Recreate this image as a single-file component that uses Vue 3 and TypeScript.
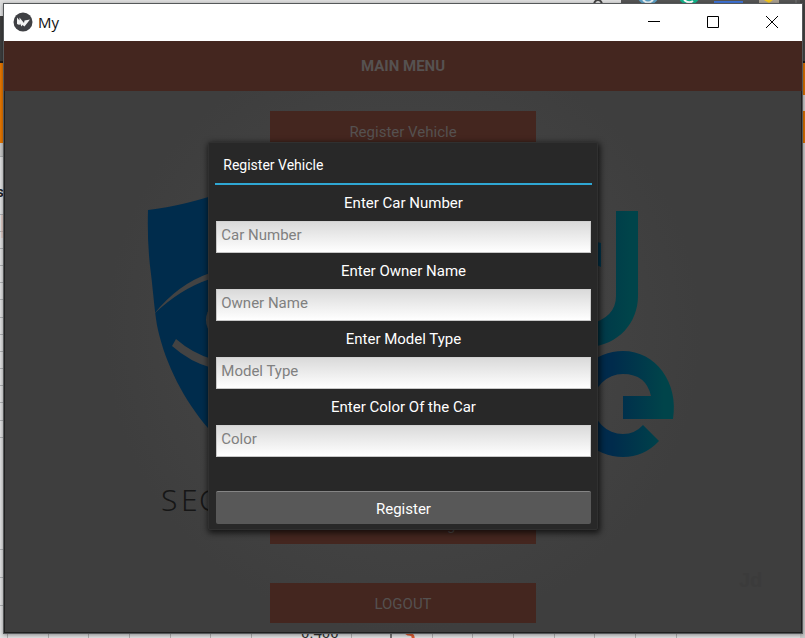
<script setup lang="ts">
import { reactive } from 'vue'

interface Field {
  id: string
  label: string
  placeholder: string
}

const fields: Field[] = [
  { id: 'car-number', label: 'Enter Car Number', placeholder: 'Car Number' },
  { id: 'owner-name', label: 'Enter Owner Name', placeholder: 'Owner Name' },
  { id: 'model-type', label: 'Enter Model Type', placeholder: 'Model Type' },
  { id: 'color', label: 'Enter Color Of the Car', placeholder: 'Color' },
]

const values = reactive<Record<string, string>>({
  'car-number': '',
  'owner-name': '',
  'model-type': '',
  color: '',
})

// Row and column rules of the sheet that lies behind the window
const rowLines = [156, 214, 231, 248, 265, 282, 299, 317, 334, 351, 368, 385, 402, 420, 437, 549, 577, 605]
const columnLines = [7, 48, 88, 129, 170, 210, 251, 351, 391, 432, 472, 513, 554, 594, 635, 676]
</script>

<template>
  <div class="desktop">
    <svg class="behind" viewBox="0 0 805 638" preserveAspectRatio="xMidYMid slice" aria-hidden="true">
      <rect width="805" height="638" fill="#e0e1e2" />
      <rect width="805" height="4" fill="#dedede" />
      <rect y="16" width="4" height="45" fill="#3d3d3d" />
      <rect y="61" width="4" height="2" fill="#1c1c1c" />
      <rect y="63" width="4" height="80" fill="#e67700" />
      <rect y="143" width="4" height="13" fill="#c9c9c9" />
      <rect x="800" width="5" height="638" fill="#cbcbcb" />
      <rect x="621" width="184" height="4" fill="#555" />
      <rect x="800" width="5" height="61" fill="#444" />
      <rect x="800" y="61" width="5" height="2" fill="#1c1c1c" />
      <rect x="800" y="63" width="5" height="32" fill="#d87000" />
      <rect x="800" y="111" width="5" height="32" fill="#d87000" />
      <rect v-for="y in rowLines" :key="'r' + y" :y="y" width="4" height="1" fill="#b0b2b4" />
      <rect v-for="x in columnLines" :key="'c' + x" :x="x" y="632" width="1" height="6" fill="#b0b0b0" />
      <rect x="390" y="632" width="2" height="6" fill="#777" />
      <path d="M2 215v23" stroke="#e2b9ad" />
      <path d="M594 4q1-4 4-4t4 4" fill="none" stroke="#444" stroke-width="2" />
      <circle cx="648" cy="-6" r="11" fill="#5b9fc4" />
      <path d="M643 0q5 5 10 0" fill="none" stroke="#e8f1f5" stroke-width="2" />
      <circle cx="689" cy="-6" r="11" fill="#12b38a" />
      <path d="M684 0q5 4 9 1" fill="none" stroke="#fff" stroke-width="2" />
      <rect x="714" y="1" width="29" height="3" fill="#3f74d8" />
      <rect x="759" y="0" width="20" height="3" fill="#a99f90" />
      <path d="M764 0h9l-4 3z" fill="#f2c51d" />
      <path d="M796 0v4" stroke="#777" />
      <text x="0" y="197" class="sheet-bold">s</text>
      <text x="301" y="638" class="sheet-text">0.400</text>
      <path d="M405 632l3 2q6 0 5 5" fill="none" stroke="#dc5b31" stroke-width="3" />
    </svg>

    <div class="window">
      <header class="titlebar">
        <svg class="app-icon" viewBox="0 0 20 20" aria-hidden="true">
          <circle cx="10" cy="10" r="9.5" fill="#3f4044" />
          <path d="M4 5.5l2.500 3V5.500L11 11l.5-2.500 5.500-1-5.500 7-2-1.500-1 1.500-1.500-3L6.500 13 4 12z" fill="#f4f4f4" />
        </svg>
        <span class="window-name">My</span>
        <div class="controls">
          <button type="button" aria-label="Minimize">
            <svg viewBox="0 0 12 12"><path d="M0 5.5h12" /></svg>
          </button>
          <button type="button" aria-label="Maximize">
            <svg viewBox="0 0 12 12"><path d="M.5.5h11v11H.5z" /></svg>
          </button>
          <button type="button" aria-label="Close">
            <svg viewBox="0 0 12 12"><path d="M0 0l12 12M12 0L0 12" /></svg>
          </button>
        </div>
      </header>

      <main class="client">
        <h1 class="menu-title">MAIN MENU</h1>
        <div class="stage">
          <svg class="artwork" viewBox="4 91 798 541" preserveAspectRatio="xMidYMid slice" aria-hidden="true">
            <defs>
              <linearGradient id="teal" gradientUnits="userSpaceOnUse" x1="590" y1="0" x2="630" y2="0">
                <stop offset="0" stop-color="#003548" />
                <stop offset="1" stop-color="#00444a" />
              </linearGradient>
              <linearGradient id="ring" gradientUnits="userSpaceOnUse" x1="612" y1="0" x2="664" y2="0">
                <stop offset="0" stop-color="#002b4c" />
                <stop offset="1" stop-color="#00444a" />
              </linearGradient>
            </defs>
            <path
              d="M148 210Q184 206 230 190V449Q222 444 208 428C184 400 166 365 158 330C155 317 153 290 151 274Q147 245 148 210Z"
              fill="#002c4c"
            />
            <path d="M154 314Q178 284 210 273V279Q180 289 154 314Z" fill="#434343" />
            <path d="M176 339Q192 353 212 359V368Q190 362 172 346Z" fill="#434343" />
            <circle cx="226" cy="320" r="20" fill="#434343" />
            <path d="M590 240L601 243V267L590 262Z" fill="#003952" />
            <path
              d="M616 211H638V296C638 323 618 345 590 347V324Q616 317 616 296Z"
              fill="url(#teal)"
            />
            <path
              d="M623 419H673C679 383 656 351 623 351A53 53 0 0 0 623 457Q644 457 659 441L643 425Q635 434 623 434A30 30 0 0 1 623 374Q646 374 651 396H623Z"
              fill="url(#ring)"
            />
            <text x="161 181 199" y="511" class="art-word">SEC</text>
            <text x="739" y="587" class="art-mark">Jd</text>
          </svg>
          <nav class="menu">
            <button type="button">Register Vehicle</button>
            <button type="button" class="push">Detection Of Images</button>
            <button type="button">LOGOUT</button>
          </nav>
        </div>

        <div class="overlay">
          <form class="dialog" role="dialog" aria-labelledby="dialog-title" @submit.prevent>
            <h2 id="dialog-title">Register Vehicle</h2>
            <template v-for="f in fields" :key="f.id">
              <label :for="f.id">{{ f.label }}</label>
              <input :id="f.id" v-model="values[f.id]" type="text" :placeholder="f.placeholder" />
            </template>
            <button type="submit">Register</button>
          </form>
        </div>
      </main>
    </div>
  </div>
</template>

<style>
body {
  margin: 0;
}
</style>

<style scoped>
* {
  box-sizing: border-box;
}

.desktop {
  position: relative;
  display: flex;
  min-height: 100vh;
  padding: 3px 2px 4px 3px;
  overflow: hidden;
  font: 15px/20px Roboto, sans-serif;
}

.behind,
.artwork {
  position: absolute;
  inset: 0;
  width: 100%;
  height: 100%;
}

.sheet-bold {
  font: bold 14px Roboto, sans-serif;
  text-anchor: middle;
  fill: #222;
}

.sheet-text {
  font: 15px Roboto, sans-serif;
  fill: #333;
}

.window {
  position: relative;
  flex: 1;
  display: flex;
  flex-direction: column;
  border: 1px solid #55585a;
  box-shadow: 0 1px 4px rgba(0, 0, 0, 0.4);
}

.titlebar {
  display: flex;
  align-items: center;
  height: 37px;
  padding: 0 1px 2px 9px;
  background: #fff;
}

.app-icon {
  width: 20px;
  height: 20px;
}

.window-name {
  margin-left: 5px;
  color: #111;
  font: 15px/20px "Open Sans", sans-serif;
}

.controls {
  display: flex;
  height: 100%;
  margin-left: auto;
}

.controls button {
  display: grid;
  place-items: center;
  width: 59px;
  padding: 0;
  border: 0;
  background: none;
}

.controls svg {
  width: 12px;
  height: 12px;
  fill: none;
  stroke: #000;
}

.client {
  position: relative;
  flex: 1;
  display: flex;
  flex-direction: column;
}

.menu-title {
  margin: 0;
  background: #44261f;
  color: #565251;
  font-size: 15px;
  line-height: 50px;
  text-align: center;
}

.stage {
  position: relative;
  flex: 1;
  display: flex;
  border: solid #1f1f1f;
  border-width: 0 1px 1px;
  background: radial-gradient(circle at 50% 45%, #474747, #444 30%, #3e3e3e 60%);
}

.art-word {
  font: 30px "Noto Sans", sans-serif;
  font-weight: 300;
  fill: #161616;
}

.art-mark {
  font: bold 20px "Liberation Sans", sans-serif;
  fill: #3b3b3b;
}

.menu {
  position: relative;
  flex: 1;
  display: flex;
  flex-direction: column;
  align-items: center;
  gap: 39px;
  padding: 20px 0 9px;
}

.menu button {
  width: 33.4%;
  height: 40px;
  padding: 2px 0 0;
  border: 0;
  background: #44261f;
  color: #555150;
  font: inherit;
}

.menu .push {
  margin-top: auto;
}

.overlay {
  position: absolute;
  inset: 0;
  display: grid;
  place-items: center;
  padding-bottom: 2px;
}

.dialog {
  display: flex;
  flex-direction: column;
  width: 48.8%;
  min-width: 300px;
  padding: 0 5px 5px 6px;
  border: 1px solid #303030;
  border-radius: 2px;
  background: #282828;
  box-shadow: 1px 2px 6px 1px rgba(0, 0, 0, 0.7);
  color: #fff;
}

.dialog h2 {
  margin: 0;
  padding: 4px 8px 0;
  border-bottom: 2px solid #2fa7d4;
  font-size: 14px;
  font-weight: 400;
  line-height: 36px;
}

.dialog label {
  padding-bottom: 1px;
  margin-top: 1px;
  line-height: 34px;
  text-align: center;
}

.dialog input {
  height: 32px;
  margin: 0 1px;
  padding: 0 4px 5px;
  border: 1px solid #c8c8c8;
  border-top-color: #d2d2d2;
  border-radius: 0;
  background: linear-gradient(#dadada, #fff);
  color: #222;
  font: inherit;
}

.dialog input::placeholder {
  color: #808080;
  opacity: 1;
}

.dialog button {
  height: 33px;
  margin: 34px 1px 0;
  padding: 2px 0 0;
  border: 0;
  border-top: 1px solid #858585;
  border-radius: 2px;
  background: #585858;
  color: #fff;
  font: inherit;
}
</style>
